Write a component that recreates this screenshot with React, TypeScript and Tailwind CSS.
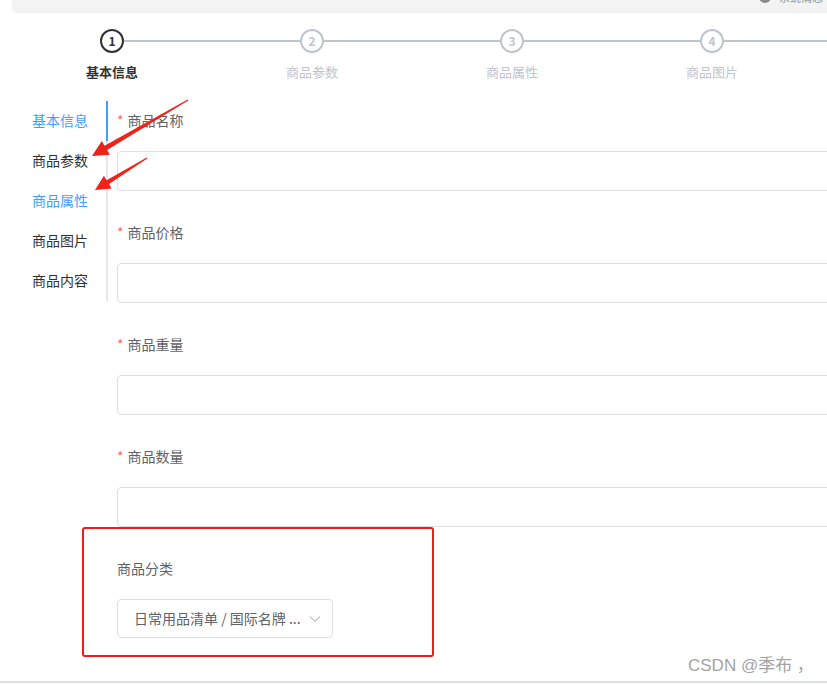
import React from "react";

const FONT = { fontFamily: '"Noto Sans CJK SC", "Noto Sans", "Liberation Sans", sans-serif' };

const steps = ["基本信息", "商品参数", "商品属性", "商品图片", "商品内容"];
const tabs = ["基本信息", "商品参数", "商品属性", "商品图片", "商品内容"];
const fields = ["商品名称", "商品价格", "商品重量", "商品数量"];

function Step({ idx, title }: { idx: number; title: string }) {
  const active = idx === 0;
  return (
    <div className="w-[200px] shrink-0 flex flex-col items-center">
      <div className="flex items-center w-full h-[24px]">
        <div className={`flex-1 h-[2px] ${idx === 0 ? "bg-transparent" : "bg-[#c0c4cc]"}`} />
        <div
          className={`w-[24px] h-[24px] rounded-full border-2 flex items-center justify-center text-[12px] font-semibold leading-none ${
            active ? "border-[#303133] text-[#303133]" : "border-[#c0c4cc] text-[#c0c4cc]"
          }`}
        >
          {idx + 1}
        </div>
        <div className="flex-1 h-[2px] bg-[#c0c4cc]" />
      </div>
      <div
        className={`mt-[9px] text-[13px] leading-[20px] ${
          active ? "text-[#303133] font-bold" : "text-[#c0c4cc]"
        }`}
      >
        {title}
      </div>
    </div>
  );
}

export default function App() {
  return (
    <div className="relative w-[827px] h-[685px] overflow-hidden bg-white flex flex-col" style={FONT}>
      {/* top bar */}
      <div className="ml-[12px] h-[13px] bg-[#f3f3f3] rounded-bl-[4px] flex justify-end items-start overflow-hidden pr-[4px] shrink-0">
        <div className="flex items-center gap-[8px] -mt-[9px]">
          <div className="w-[12px] h-[12px] rounded-full bg-[#8a8a8a]" />
          <span className="text-[11px] leading-[12px] text-[#909399]">系统消息</span>
        </div>
      </div>

      {/* steps */}
      <div className="ml-[12px] mt-[16px] flex shrink-0">
        {steps.map((s, i) => (
          <Step key={s} idx={i} title={s} />
        ))}
      </div>

      {/* body */}
      <div className="mt-[19px] flex">
        <div className="ml-[12px] w-[96px] shrink-0 self-start flex flex-col">
          {tabs.map((t, i) => (
            <div
              key={t}
              className={`h-[40px] leading-[38px] pl-[20px] text-[14px] border-r-2 ${
                i === 0 ? "border-[#409eff]" : "border-[#e4e7ed]"
              } ${i === 0 || i === 2 ? "text-[#409eff]" : "text-[#303133]"}`}
            >
              {t}
            </div>
          ))}
        </div>

        <div className="ml-[9px] flex flex-col">
          {fields.map((f) => (
            <div key={f} className="mb-[22px]">
              <div className="h-[40px] leading-[38px] text-[14px] text-[#606266] mb-[10px]">
                <span className="text-[#f56c6c] mr-[4px]">*</span>
                {f}
              </div>
              <div className="w-[760px] h-[40px] border border-[#dcdfe6] rounded-[4px] bg-white" />
            </div>
          ))}
          <div>
            <div className="h-[40px] leading-[38px] text-[14px] text-[#606266] mb-[10px]">商品分类</div>
            <div className="w-[216px] h-[39px] border border-[#dcdfe6] rounded-[4px] bg-white flex items-center pl-[16px] pr-[11px]">
              <span className="flex-1 text-[14px] text-[#606266] whitespace-nowrap">日常用品清单 / 国际名牌 ...</span>
              <svg width="12" height="8" viewBox="0 0 12 8" className="shrink-0">
                <polyline points="1,1.5 6,6.5 11,1.5" fill="none" stroke="#c0c4cc" strokeWidth="1.2" />
              </svg>
            </div>
          </div>
        </div>
      </div>

      <div className="flex-1" />
      <div className="h-[2px] bg-[#dcdfe6] shrink-0" />
      <div className="h-[2px] shrink-0" />

      {/* annotation: red box */}
      <div className="absolute left-[82px] top-[527px] w-[352px] h-[130px] border-2 border-[#f21c17] rounded-[3px] pointer-events-none" />

      {/* annotation: red arrows */}
      <svg className="absolute left-0 top-0 pointer-events-none" width="827" height="685">
        <polygon
          points="92,156 109.8,154.8 107.1,150.1 188.3,100.4 187.7,99.6 104.5,145.7 101.8,141"
          fill="#f0231b"
        />
        <polygon
          points="95,190 111.7,188.5 109,184 147.3,158.4 146.7,157.6 106.6,180.2 103.9,175.7"
          fill="#f0231b"
        />
      </svg>

      {/* watermark */}
      <div
        className="absolute left-[688px] top-[655px] text-[17px] leading-[22px] text-[#a3a3a3] whitespace-nowrap"
        style={{ fontFamily: '"Liberation Sans", "Noto Sans CJK SC", sans-serif' }}
      >
        CSDN @季布 ，
      </div>
    </div>
  );
}
